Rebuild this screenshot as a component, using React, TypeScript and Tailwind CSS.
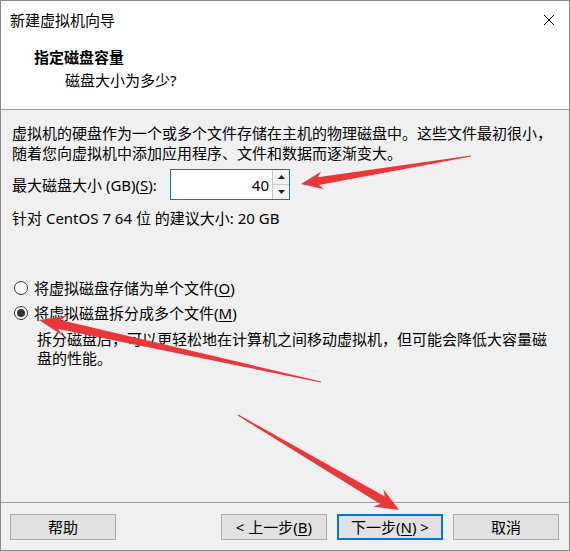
import React from "react";

type P = [number, number];

function arrowPoints(tail: P, tip: P, L: number, H: number, S: number): string {
  const dx = tip[0] - tail[0];
  const dy = tip[1] - tail[1];
  const len = Math.hypot(dx, dy);
  const ux = dx / len;
  const uy = dy / len;
  const nx = -uy;
  const ny = ux;
  const bx = tip[0] - ux * L;
  const by = tip[1] - uy * L;
  const bx2 = tip[0] - ux * (L * 0.8);
  const by2 = tip[1] - uy * (L * 0.8);
  const pts: P[] = [
    [tail[0] + nx * 0.6, tail[1] + ny * 0.6],
    [bx2 + nx * S, by2 + ny * S],
    [bx + nx * H, by + ny * H],
    tip,
    [bx - nx * H, by - ny * H],
    [bx2 - nx * S, by2 - ny * S],
    [tail[0] - nx * 0.6, tail[1] - ny * 0.6],
  ];
  return pts.map((p) => `${p[0].toFixed(1)},${p[1].toFixed(1)}`).join(" ");
}

function U({ children }: { children: React.ReactNode }) {
  return <span className="underline underline-offset-2">{children}</span>;
}

function Btn({ children, primary }: { children: React.ReactNode; primary?: boolean }) {
  return (
    <div
      className={
        "w-[106px] h-[26px] flex items-center justify-center text-[15px] leading-none text-black " +
        (primary ? "border-2 border-[#0078d7] bg-[#e1e1e1]" : "border border-[#adadad] bg-[#e1e1e1]")
      }
    >
      {children}
    </div>
  );
}

function Radio({ checked }: { checked?: boolean }) {
  return (
    <div className="w-[14px] h-[14px] rounded-full border border-[#333] bg-white flex items-center justify-center shrink-0">
      {checked && <div className="w-[8px] h-[8px] rounded-full bg-[#333]" />}
    </div>
  );
}

export default function App() {
  return (
    <div
      className="relative w-[570px] h-[551px] border border-[#8a8a8a] flex flex-col bg-[#f0f0f0] text-black overflow-hidden"
      style={{ fontFamily: "'Noto Sans', 'Noto Sans CJK SC', sans-serif" }}
    >
      {/* Header (white) */}
      <div className="bg-white h-[109px] border-b border-[#a0a0a0] flex flex-col">
        <div className="h-[37px] flex items-center justify-between pl-[9px] pr-[14px]">
          <span className="text-[15px] leading-5">新建虚拟机向导</span>
          <svg width="12" height="12" viewBox="0 0 12 12" className="mt-[1px]">
            <path d="M1 1 L11 11 M11 1 L1 11" stroke="#000" strokeWidth="1" />
          </svg>
        </div>
        <div className="pl-[33px] mt-[9px] text-[15px] leading-5 font-bold">指定磁盘容量</div>
        <div className="pl-[64px] mt-[3px] text-[15px] leading-5">磁盘大小为多少?</div>
      </div>

      {/* Body */}
      <div className="flex-1 flex flex-col px-[11px] pt-[13px] text-[15px]">
        <div className="leading-5">
          虚拟机的硬盘作为一个或多个文件存储在主机的物理磁盘中。这些文件最初很小，
          <br />
          随着您向虚拟机中添加应用程序、文件和数据而逐渐变大。
        </div>
        <div className="mt-[6px] flex items-center h-[31px]">
          <span className="leading-5 w-[158px]">
            最大磁盘大小 (GB)(<U>S</U>):
          </span>
          <div className="flex h-[31px] w-[120px] border border-[#0078d7] bg-white">
            <div className="flex-1 flex items-center justify-end pr-[3px] leading-5">40</div>
            <div className="w-[17px] flex flex-col border-l border-[#c8c8c8]">
              <div className="flex-1 flex items-center justify-center bg-[#f3f3f3] border-b border-[#c8c8c8]">
                <svg width="7" height="4" viewBox="0 0 7 4">
                  <path d="M0 4 L3.5 0 L7 4 Z" fill="#222" />
                </svg>
              </div>
              <div className="flex-1 flex items-center justify-center bg-[#f3f3f3]">
                <svg width="7" height="4" viewBox="0 0 7 4">
                  <path d="M0 0 L3.5 4 L7 0 Z" fill="#222" />
                </svg>
              </div>
            </div>
          </div>
        </div>
        <div className="mt-[8px] leading-5">针对 CentOS 7 64 位 的建议大小: 20 GB</div>

        <div className="mt-[50px] flex items-center gap-[6px] pl-[2px] leading-5">
          <Radio />
          <span>
            将虚拟磁盘存储为单个文件(<U>O</U>)
          </span>
        </div>
        <div className="mt-[5px] flex items-center gap-[6px] pl-[2px] leading-5">
          <Radio checked />
          <span>
            将虚拟磁盘拆分成多个文件(<U>M</U>)
          </span>
        </div>
        <div className="mt-[7px] pl-[25px] leading-[19px]">
          拆分磁盘后，可以更轻松地在计算机之间移动虚拟机，但可能会降低大容量磁
          <br />
          盘的性能。
        </div>
      </div>

      {/* Footer */}
      <div className="border-t border-[#a0a0a0] h-[48px] flex items-start justify-between pt-[11px] pl-[9px] pr-[10px]">
        <Btn>帮助</Btn>
        <div className="flex gap-[10px]">
          <Btn>
            &lt; 上一步(<U>B</U>)
          </Btn>
          <Btn primary>
            下一步(<U>N</U>) &gt;
          </Btn>
          <Btn>取消</Btn>
        </div>
      </div>

      {/* Annotation arrows */}
      <svg
        className="absolute left-0 top-0 pointer-events-none"
        width="570"
        height="551"
        viewBox="0 0 570 551"
      >
        <polygon points={arrowPoints([470, 155], [300, 183], 22, 9, 4)} fill="#e8383a" />
        <polygon points={arrowPoints([320, 381], [38, 319], 26, 10, 4.5)} fill="#e8383a" />
        <polygon points={arrowPoints([237, 414], [398, 509], 24, 10, 4.5)} fill="#e8383a" />
      </svg>
    </div>
  );
}
